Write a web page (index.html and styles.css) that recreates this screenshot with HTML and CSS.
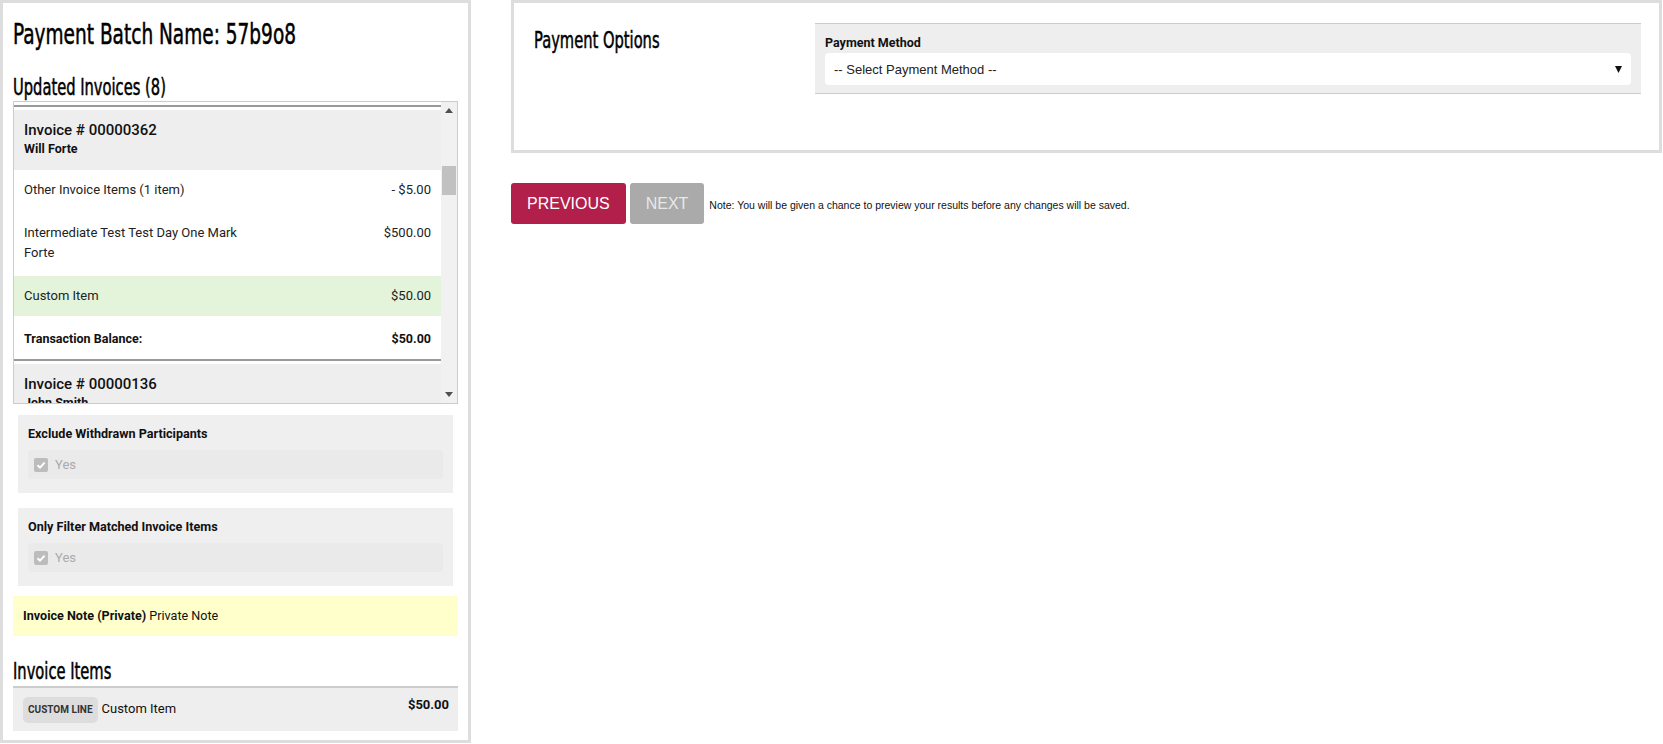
FILE: index.html
```html
<!DOCTYPE html>
<html>
<head>
<meta charset="utf-8">
<title>Payment Batch</title>
<link rel="stylesheet" href="styles.css">
</head>
<body>
<div class="page">
  <section class="left-panel">
    <h1 class="batch-title">Payment Batch Name: 57b9o8</h1>
    <h2 class="section-title">Updated Invoices (8)</h2>
    <div class="invoice-scroll">
      <div class="invoice-list">
        <div class="invoice">
          <div class="invoice-head">
            <div class="inv-num">Invoice # 00000362</div>
            <div class="inv-name">Will Forte</div>
          </div>
          <div class="inv-row r-other"><span class="desc">Other Invoice Items (1 item)</span><span class="amt">- $5.00</span></div>
          <div class="inv-row r-multi"><span class="desc">Intermediate Test Test Day One Mark Forte</span><span class="amt">$500.00</span></div>
          <div class="inv-row r-custom"><span class="desc">Custom Item</span><span class="amt">$50.00</span></div>
          <div class="inv-row r-total"><span class="desc">Transaction Balance:</span><span class="amt">$50.00</span></div>
        </div>
        <div class="invoice">
          <div class="invoice-head">
            <div class="inv-num">Invoice # 00000136</div>
            <div class="inv-name">John Smith</div>
          </div>
        </div>
      </div>
      <div class="scrollbar">
        <div class="sb-btn"><svg width="8" height="5" viewBox="0 0 8 5"><polygon points="0,5 8,5 4,0" fill="#505050"/></svg></div>
        <div class="sb-track"><div class="sb-thumb"></div></div>
        <div class="sb-btn"><svg width="8" height="5" viewBox="0 0 8 5"><polygon points="0,0 8,0 4,5" fill="#505050"/></svg></div>
      </div>
    </div>

    <div class="option-box">
      <div class="option-label">Exclude Withdrawn Participants</div>
      <div class="check-row">
        <span class="checkbox"><svg width="14" height="14" viewBox="0 0 14 14"><polyline points="3.5,7.2 6,9.6 10.6,4.6" fill="none" stroke="#fff" stroke-width="2"/></svg></span>
        <span class="check-text">Yes</span>
      </div>
    </div>
    <div class="option-box second">
      <div class="option-label">Only Filter Matched Invoice Items</div>
      <div class="check-row">
        <span class="checkbox"><svg width="14" height="14" viewBox="0 0 14 14"><polyline points="3.5,7.2 6,9.6 10.6,4.6" fill="none" stroke="#fff" stroke-width="2"/></svg></span>
        <span class="check-text">Yes</span>
      </div>
    </div>

    <div class="note-private"><b>Invoice Note (Private)</b> Private Note</div>

    <h2 class="items-title">Invoice Items</h2>
    <div class="items-box">
      <span class="badge">CUSTOM LINE</span>
      <span class="item-name">Custom Item</span>
      <span class="item-amt">$50.00</span>
    </div>
  </section>

  <section class="right-col">
    <div class="options-panel">
      <h2 class="options-title">Payment Options</h2>
      <div class="field-box">
        <div class="field-label">Payment Method</div>
        <div class="select">
          <span>-- Select Payment Method --</span>
          <svg class="select-arrow" width="7" height="7" viewBox="0 0 7 7"><polygon points="0,0 7,0 3.5,7" fill="#111"/></svg>
        </div>
      </div>
    </div>
    <div class="actions">
      <button class="btn btn-prev">PREVIOUS</button>
      <button class="btn btn-next">NEXT</button>
      <span class="action-note">Note: You will be given a chance to preview your results before any changes will be saved.</span>
    </div>
  </section>
</div>
</body>
</html>
```

FILE: styles.css
```css
* { box-sizing: border-box; }

body {
  margin: 0;
  background: #fff;
  color: #222;
  font-family: Roboto, "Liberation Sans", Arial, sans-serif;
}

.page {
  display: flex;
  align-items: flex-start;
  gap: 40px;
  padding-right: 1px;
}

/* ---------- Left panel ---------- */
.left-panel {
  width: 471px;
  flex: none;
  border: 3px solid #ddd;
  padding: 0 10px 9px;
}

/* condensed display headings */
.batch-title,
.section-title,
.items-title,
.options-title {
  font-family: "DejaVu Sans Condensed", "DejaVu Sans", sans-serif;
  font-weight: normal;
  color: #000;
  margin: 0;
  white-space: nowrap;
  -webkit-text-stroke: 0.5px #000;
  transform: scaleX(0.71);
  transform-origin: left center;
}

.batch-title {
  font-size: 29px;
  line-height: 34px;
  margin-top: 14px;
}

.section-title {
  font-size: 23px;
  line-height: 28px;
  margin-top: 22px;
}

.invoice-scroll {
  height: 303px;
  border: 1px solid #ccc;
  display: flex;
  overflow: hidden;
}

.invoice-list {
  flex: 1;
  padding-top: 3px;
  overflow: hidden;
}

.invoice {
  border-top: 2px solid #999;
  padding-top: 3px;
}

.invoice-head {
  background: #eee;
  padding: 10px 10px 12px;
}

.inv-num {
  font-size: 15px;
  line-height: 20px;
  font-weight: 500;
  color: #111;
}

.inv-name {
  font-size: 12.5px;
  line-height: 18px;
  font-weight: bold;
  color: #111;
}

.inv-row {
  display: flex;
  justify-content: space-between;
  align-items: flex-start;
  font-size: 13px;
  line-height: 20px;
  padding: 10px 10px;
  color: #222;
}

.inv-row .desc { max-width: 224px; }

.r-multi { padding: 13px 10px; }
.r-custom { background: #e3f4db; }
.r-total { padding: 13px 10px 10px; font-weight: bold; font-size: 12.5px; color: #111; }

.scrollbar {
  width: 16px;
  flex: none;
  background: #f1f1f1;
  display: flex;
  flex-direction: column;
}

.sb-btn {
  height: 17px;
  display: flex;
  align-items: center;
  justify-content: center;
}

.sb-track {
  flex: 1;
  padding: 47px 1px 0;
}

.sb-thumb {
  height: 29px;
  background: #c1c1c1;
}

/* option boxes */
.option-box {
  margin: 11px 5px 0;
  background: #efefef;
  padding: 10px 10px 14px;
}

.option-box.second { margin-top: 15px; }

.option-label {
  font-size: 12.6px;
  line-height: 18px;
  font-weight: bold;
  color: #111;
}

.check-row {
  margin-top: 7px;
  height: 29px;
  background: #eaeaea;
  border-radius: 4px;
  display: flex;
  align-items: center;
  padding-left: 6px;
  gap: 7px;
}

.checkbox {
  width: 14px;
  height: 14px;
  background: #bcbcbc;
  border-radius: 2px;
  display: flex;
}

.check-text {
  font-size: 13px;
  color: #aaa;
}

.note-private {
  margin-top: 10px;
  background: #ffc;
  padding: 10px;
  font-size: 12.6px;
  line-height: 20px;
  color: #111;
}

.items-title {
  font-size: 23px;
  line-height: 26px;
  margin-top: 22px;
  margin-bottom: 2px;
}

.items-box {
  border-top: 2px solid #ccc;
  background: #eee;
  padding: 9px 9px 8px 10px;
  display: flex;
  align-items: baseline;
  font-size: 13px;
}

.badge {
  height: 26px;
  line-height: 26px;
  padding: 0 5px;
  background: #ddd;
  border-radius: 5px;
  font-size: 10px;
  font-weight: bold;
  color: #333;
}

.item-name {
  margin-left: 4px;
  flex: 1;
  color: #111;
}

.item-amt {
  font-weight: bold;
  color: #111;
  align-self: flex-start;
  line-height: 16px;
}

/* ---------- Right column ---------- */
.right-col {
  flex: 1;
}

.options-panel {
  border: 3px solid #ddd;
  padding: 20px 18px 56px 20px;
  display: flex;
  align-items: flex-start;
}

.options-title {
  width: 281px;
  flex: none;
  font-size: 23px;
  line-height: 26px;
  margin-top: 4px;
}

.field-box {
  flex: 1;
  background: #eee;
  border-top: 1px solid #ccc;
  border-bottom: 1px solid #ccc;
  padding: 10px 10px 8px;
}

.field-label {
  font-size: 12.5px;
  line-height: 17px;
  font-weight: bold;
  color: #111;
}

.select {
  margin-top: 2px;
  height: 32px;
  background: #fff;
  border-radius: 4px;
  display: flex;
  align-items: center;
  justify-content: space-between;
  padding: 0 9px;
  font-family: "Liberation Sans", Arial, sans-serif;
  font-size: 13px;
  color: #222;
}

.actions {
  margin-top: 30px;
  display: flex;
  align-items: baseline;
}

.btn {
  height: 41px;
  padding: 0 16px;
  border: none;
  border-radius: 3px;
  font-family: "Liberation Sans", Arial, sans-serif;
  font-size: 16px;
  color: #fff;
}

.btn-prev { background: #b21f4a; }
.btn-next { background: #aaa; color: #e8e8e8; margin-left: 4px; }

.action-note {
  margin-left: 5px;
  font-family: "Liberation Sans", Arial, sans-serif;
  font-size: 10.5px;
  color: #111;
}
```
